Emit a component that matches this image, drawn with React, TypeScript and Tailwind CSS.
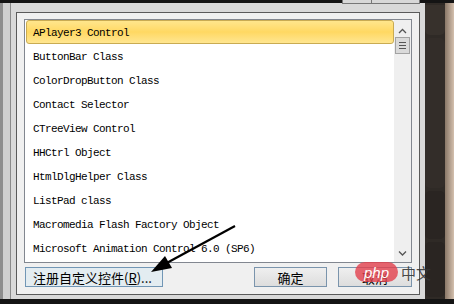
import React from "react";

const items = [
  "APlayer3 Control",
  "ButtonBar Class",
  "ColorDropButton Class",
  "Contact Selector",
  "CTreeView Control",
  "HHCtrl Object",
  "HtmlDlgHelper Class",
  "ListPad class",
  "Macromedia Flash Factory Object",
  "Microsoft Animation Control 6.0 (SP6)",
];

const cjk = { fontFamily: '"Noto Sans CJK SC", "Noto Sans", sans-serif' };

export default function App() {
  return (
    <div className="relative w-[454px] h-[304px] overflow-hidden bg-[#111] flex flex-col">
      <div className="h-[3px] bg-[#141414] shrink-0" />
      <div className="flex h-[296px] shrink-0">
        {/* dialog */}
        <div className="w-[425px] bg-[#cfcfcf] border-l-[3px] border-[#8d8d8d] pl-[7px] flex">
          <div className="flex-1 border-l border-[#8a8a8a] bg-[#d9d9d9] pl-[5px] pr-[5px] pt-[9px] pb-[4px] flex">
            <div className="flex-1 border border-[#5a5a5a] bg-[#f0f0f0] px-[7px] pt-[6px] pb-[7px] flex flex-col">
              {/* listbox */}
              <div className="h-[244px] border border-[#828790] bg-white flex">
                <div className="flex-1 pl-px flex flex-col">
                  {items.map((item, i) => (
                    <div
                      key={item}
                      className={
                        i === 0
                          ? "h-[24px] shrink-0 flex items-center pl-[6px] pt-[2px] rounded-[3px] border border-[#c9ab52] bg-gradient-to-b from-[#ffe68c] via-[#ffd862] to-[#ffe690]"
                          : "h-[24px] shrink-0 flex items-center pl-[7px] pt-[3px]"
                      }
                      style={{ fontFamily: '"Liberation Mono", monospace' }}
                    >
                      <span className="text-[11px] tracking-[-0.6px] text-black">{item}</span>
                    </div>
                  ))}
                </div>
                {/* scrollbar */}
                <div className="w-[17px] bg-[#efefef] flex flex-col items-center">
                  <svg width="11" height="8" viewBox="0 0 11 8" className="mt-[7px]">
                    <path d="M2 6 L5.5 2.5 L9 6" stroke="#555" strokeWidth="1.3" fill="none" />
                  </svg>
                  <div className="mt-[2px] w-[15px] h-[17px] bg-[#dadada] border border-[#a3a3a3] flex flex-col items-center justify-center gap-[2px]">
                    <div className="w-[7px] h-px bg-[#555]" />
                    <div className="w-[7px] h-px bg-[#555]" />
                    <div className="w-[7px] h-px bg-[#555]" />
                  </div>
                  <div className="flex-1" />
                  <svg width="11" height="8" viewBox="0 0 11 8" className="mb-[5px]">
                    <path d="M2 2.5 L5.5 6 L9 2.5" stroke="#555" strokeWidth="1.3" fill="none" />
                  </svg>
                </div>
              </div>
              {/* buttons */}
              <div className="mt-[4px] flex items-center" style={cjk}>
                <div className="ml-px w-[138px] h-[20px] border border-[#7196b5] bg-[#e3ecf1] flex items-center pl-[7px] text-[13px] text-black leading-none">
                  注册自定义控件(<span className="underline">R</span>)...
                </div>
                <div className="flex-1" />
                <div className="w-[73px] h-[20px] border border-[#7a94ac] bg-gradient-to-b from-[#efefef] to-[#dddddd] flex items-center justify-center text-[13px] text-black leading-none">
                  确定
                </div>
                <div className="ml-[11px] w-[74px] h-[20px] border border-[#7a94ac] bg-gradient-to-b from-[#efefef] to-[#dddddd] flex items-center justify-center text-[13px] text-black leading-none">
                  取消
                </div>
              </div>
            </div>
          </div>
        </div>
        {/* background desk / keyboard */}
        <div className="w-[29px] bg-[#4a4038] flex">
          <div className="w-[20px] bg-[#2f2a26] flex flex-col gap-[3px] py-[2px]">
            <div className="h-[30px] rounded-b-[5px] bg-[#37312c]" />
            <div className="h-[150px] rounded-[5px] bg-[#332d29]" />
            <div className="h-[48px] rounded-[5px] bg-[#2a2522]" />
            <div className="flex-1 rounded-[5px] bg-[#2a2522]" />
          </div>
          <div className="flex-1 bg-gradient-to-r from-[#8a7868] to-[#d4c0ae]" />
        </div>
      </div>
      <div className="flex-1 bg-[#141414]" />

      {/* title bar buttons peeking at top */}
      <div className="absolute left-[342px] top-0 w-[78px] h-[4px] border-x border-b border-[#777] bg-[#d8d8d8] flex">
        <div className="w-[29px] border-r border-[#777]" />
      </div>

      {/* annotation arrow */}
      <svg className="absolute left-0 top-0" width="454" height="304" viewBox="0 0 454 304">
        <line x1="235" y1="226" x2="163" y2="265" stroke="#000" strokeWidth="2.2" />
        <polygon points="151,272 165,256 172,268" fill="#000" />
      </svg>

      {/* watermark */}
      <div className="absolute left-[355px] top-[262px] flex items-center gap-[3px]">
        <div className="w-[43px] h-[20px] rounded-full bg-[#e2404c]/80 flex items-center justify-center">
          <span className="text-white italic text-[15px] leading-none" style={{ fontFamily: '"Liberation Sans", sans-serif' }}>
            php
          </span>
        </div>
        <span className="text-[#333]/90 text-[15px] leading-none" style={cjk}>
          中文
        </span>
      </div>
    </div>
  );
}
